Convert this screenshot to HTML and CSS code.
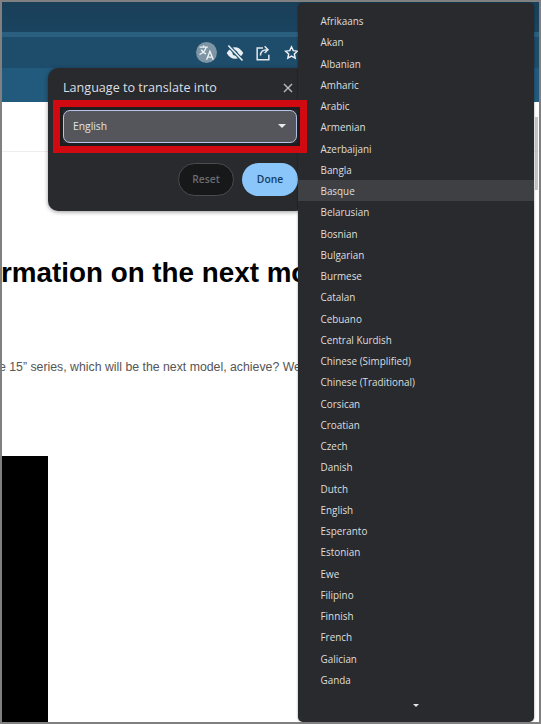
FILE: index.html
```html
<!DOCTYPE html>
<html lang="en">
<head>
<meta charset="utf-8">
<title>Language to translate into</title>
<link rel="stylesheet" href="styles.css">
</head>
<body>
<div class="frame">
  <div class="browser">
    <div class="tabstrip"></div>
    <div class="toolbar">
      <span class="tool-circle">
        <svg viewBox="0 0 24 24" width="20" height="20"><path d="M3 5h10M8 3v2M11 5c-1 4-4 7-8 9M5 8c1 2 3 4 6 5" fill="none" stroke="#eef2f5" stroke-width="1.6"/><path d="M11.5 20l4-10 4 10M13 17h5" fill="none" stroke="#eef2f5" stroke-width="1.6"/></svg>
      </span>
      <svg class="tool" viewBox="0 0 24 24" width="20" height="20"><path d="M2 12c3-5 6.500-7 10-7s7 2 10 7c-3 5-6.500 7-10 7s-7-2-10-7z" fill="#e8eef2"/><circle cx="12" cy="12" r="3" fill="#1e4f6e"/><path d="M4 3l17 18" stroke="#1e4f6e" stroke-width="4.500"/><path d="M4 3l17 18" stroke="#e8eef2" stroke-width="2"/></svg>
      <svg class="tool" viewBox="0 0 24 24" width="20" height="20"><path d="M12 6H5v14h14v-6" fill="none" stroke="#dfe7ec" stroke-width="1.800"/><path d="M9 15c0-5 3-7 8-7M14 4l4 4-4 4" fill="none" stroke="#dfe7ec" stroke-width="1.800"/></svg>
      <svg class="tool star" viewBox="0 0 24 24" width="17" height="17"><path d="M12 4l2.500 5.400 5.800.7-4.300 4 1.200 5.800-5.200-2.900-5.200 2.900 1.200-5.800-4.300-4 5.800-.7z" fill="none" stroke="#eef2f5" stroke-width="2"/></svg>
    </div>
    <div class="bookmarks"></div>
  </div>
  <main class="page">
    <div class="page-rule"></div>
    <h1 class="headline">rmation on the next mo</h1>
    <p class="lede">e 15” series, which will be the next model, achieve? We</p>
    <div class="black-box"></div>
    <div class="scroll-thumb"></div>
  </main>

  <section class="bubble">
    <div class="bubble-head">
      <span class="bubble-title">Language to translate into</span>
      <svg class="close" viewBox="0 0 10 10" width="10" height="10"><path d="M1 1l8 8M9 1l-8 8" fill="none" stroke="#b9bcc0" stroke-width="1.400"/></svg>
    </div>
    <div class="select">
      <span>English</span>
      <span class="caret"></span>
    </div>
    <div class="actions">
      <button class="btn reset">Reset</button>
      <button class="btn done">Done</button>
    </div>
  </section>

  <ul class="menu">
    <li>Afrikaans</li><li>Akan</li><li>Albanian</li><li>Amharic</li>
    <li>Arabic</li><li>Armenian</li><li>Azerbaijani</li><li>Bangla</li>
    <li class="hover">Basque</li><li>Belarusian</li><li>Bosnian</li><li>Bulgarian</li>
    <li>Burmese</li><li>Catalan</li><li>Cebuano</li><li>Central Kurdish</li>
    <li>Chinese (Simplified)</li><li>Chinese (Traditional)</li><li>Corsican</li><li>Croatian</li>
    <li>Czech</li><li>Danish</li><li>Dutch</li><li>English</li>
    <li>Esperanto</li><li>Estonian</li><li>Ewe</li><li>Filipino</li>
    <li>Finnish</li><li>French</li><li>Galician</li><li>Ganda</li>
    <li class="more"><span class="caret small"></span></li>
  </ul>

  <div class="annotation"></div>
</div>
</body>
</html>
```
FILE: styles.css
```css
* { box-sizing: border-box; }
html, body { margin: 0; padding: 0; }
body { width: 541px; height: 724px; overflow: hidden; background: #fff; font-family: "Liberation Sans", Arial, sans-serif; }
.frame { position: relative; width: 541px; height: 724px; border: 2px solid #808080; overflow: hidden; background: #fff; }
.browser { display: flex; flex-direction: column; height: 100px; }
.tabstrip { height: 30px; background: linear-gradient(#1a3f59, #1a4460); }
.toolbar { height: 36px; background: #1e4c6b; border-top: 5px solid #2a5f80; display: flex; align-items: center; gap: 8px; padding-left: 194px; }
.tool-circle { width: 21px; height: 21px; border-radius: 50%; background: #7d95a5; display: flex; align-items: center; justify-content: center; flex: none; }
.tool { flex: none; }
.star { margin-left: 2px; }
.bookmarks { flex: 1; background: #215a7c; }
.page { position: relative; height: 620px; overflow: hidden; }
.page-rule { height: 50px; border-bottom: 1px solid #eeeeee; }
.headline { margin: 105px 0 0 -1px; font-size: 27.800px; line-height: 32px; font-weight: 700; color: #000; white-space: nowrap; }
.lede { margin: 69px 0 0 -3px; font-size: 12.300px; line-height: 18px; color: #555; white-space: nowrap; }
.black-box { width: 46px; height: 270px; margin-top: 80px; background: #000; }
.scroll-thumb { position: absolute; left: 533px; top: 15px; width: 3px; height: 73px; background: #c4c4c4; }
.bubble { position: absolute; left: 46px; top: 66px; width: 258px; height: 143px; background: #292a2d; border-radius: 10px; box-shadow: 0 1px 4px rgba(0,0,0,.4); font-family: "Open Sans", sans-serif; }
.bubble-head { display: flex; justify-content: space-between; align-items: center; height: 36px; padding: 3px 13px 0 15px; }
.bubble-title { font-size: 12.600px; color: #dcdfe3; }
.close { flex: none; }
.select { height: 33px; margin: 6px 0 0 15px; width: 234px; border: 1.500px solid #b7c4ea; border-radius: 7px; background: #55565b; display: flex; align-items: center; justify-content: space-between; padding: 0 10px 1px 9px; font-size: 10.300px; color: #e3e3e3; }
.caret { width: 0; height: 0; border: 4px solid transparent; border-top-color: #e8e8e8; border-bottom-width: 0; }
.actions { display: flex; justify-content: flex-end; gap: 8px; margin-top: 20px; padding-right: 8px; }
.btn { width: 56px; height: 33px; border-radius: 17px; font: 600 10.300px "Open Sans", sans-serif; padding: 0 0 1px; }
.reset { background: #17181a; border: 1px solid #4a4b4f; color: #6a6c70; }
.done { background: #8ac6fa; border: 0; color: #133d5e; }
.menu { position: absolute; left: 296px; top: 1px; width: 236px; height: 719px; margin: 0; padding: 7px 0 0; list-style: none; background: #292a2d; border-radius: 5px; font-family: "Open Sans", sans-serif; font-size: 9.900px; color: #dedede; box-shadow: 0 0 2px rgba(0,0,0,.5); }
.menu li { height: 21.260px; line-height: 20.260px; padding: 1px 0 0 22.500px; white-space: nowrap; }
.menu li.hover { background: #3f4043; }
.menu li.more { display: flex; justify-content: center; align-items: center; height: 30px; padding: 0; }
.caret.small { border-width: 3px; border-bottom-width: 0; }
.annotation { position: absolute; left: 51px; top: 98px; width: 254px; height: 53px; border: 7px solid #d00a10; box-shadow: inset 0 0 0 3px #1e1e20; }
```
